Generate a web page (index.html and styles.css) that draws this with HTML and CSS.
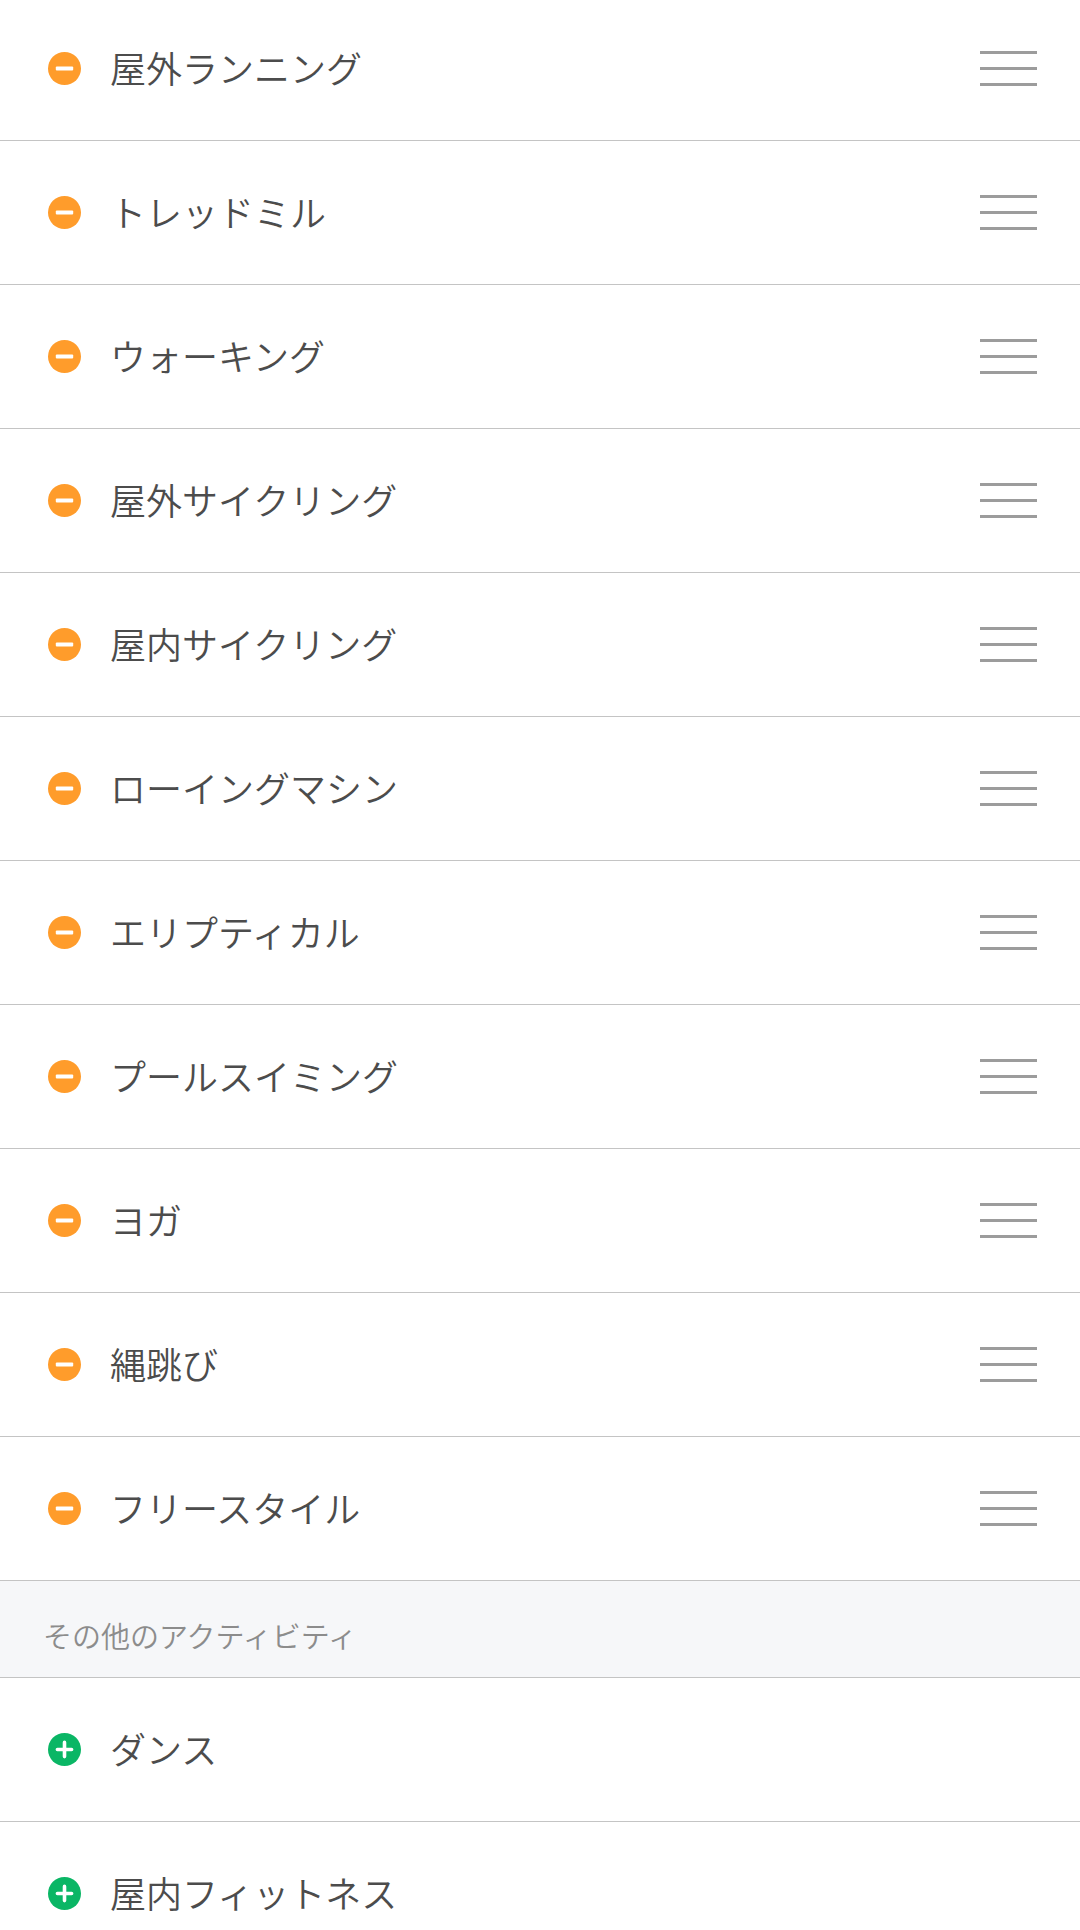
FILE: index.html
```html
<!DOCTYPE html>
<html lang="ja">
<head>
    <meta charset="UTF-8">
    <meta name="viewport" content="width=device-width, initial-scale=1.0">
    <title>アクティビティ</title>
    <link rel="stylesheet" href="styles.css">
</head>
<body>
    <svg class="symbols">
        <symbol id="minus" viewBox="0 0 33 33">
            <circle cx="16.5" cy="16.5" r="16.5" fill="#ff9c2b"/>
            <rect x="7.8" y="14.6" width="17.4" height="4" rx="1" fill="#fff"/>
        </symbol>
        <symbol id="plus" viewBox="0 0 33 33">
            <circle cx="16.5" cy="16.5" r="16.5" fill="#0ab665"/>
            <path d="M9.4 16.5h14.2M16.5 9.4v14.2" stroke="#fff" stroke-width="3.6" stroke-linecap="round"/>
        </symbol>
        <symbol id="handle" viewBox="0 0 57 35">
            <path d="M0 1.5h57M0 17.5h57M0 33.5h57" stroke="#9c9c9c" stroke-width="2.9"/>
        </symbol>
    </svg>

    <ul class="list current">
        <li class="row"><svg class="icon"><use href="#minus"/></svg><span class="name">屋外ランニング</span><svg class="handle"><use href="#handle"/></svg></li>
        <li class="row"><svg class="icon"><use href="#minus"/></svg><span class="name">トレッドミル</span><svg class="handle"><use href="#handle"/></svg></li>
        <li class="row"><svg class="icon"><use href="#minus"/></svg><span class="name">ウォーキング</span><svg class="handle"><use href="#handle"/></svg></li>
        <li class="row"><svg class="icon"><use href="#minus"/></svg><span class="name">屋外サイクリング</span><svg class="handle"><use href="#handle"/></svg></li>
        <li class="row"><svg class="icon"><use href="#minus"/></svg><span class="name">屋内サイクリング</span><svg class="handle"><use href="#handle"/></svg></li>
        <li class="row"><svg class="icon"><use href="#minus"/></svg><span class="name">ローイングマシン</span><svg class="handle"><use href="#handle"/></svg></li>
        <li class="row"><svg class="icon"><use href="#minus"/></svg><span class="name">エリプティカル</span><svg class="handle"><use href="#handle"/></svg></li>
        <li class="row"><svg class="icon"><use href="#minus"/></svg><span class="name">プールスイミング</span><svg class="handle"><use href="#handle"/></svg></li>
        <li class="row"><svg class="icon"><use href="#minus"/></svg><span class="name">ヨガ</span><svg class="handle"><use href="#handle"/></svg></li>
        <li class="row"><svg class="icon"><use href="#minus"/></svg><span class="name">縄跳び</span><svg class="handle"><use href="#handle"/></svg></li>
        <li class="row"><svg class="icon"><use href="#minus"/></svg><span class="name">フリースタイル</span><svg class="handle"><use href="#handle"/></svg></li>
    </ul>

    <h2 class="section">その他のアクティビティ</h2>

    <ul class="list">
        <li class="row"><svg class="icon"><use href="#plus"/></svg><span class="name">ダンス</span></li>
        <li class="row"><svg class="icon"><use href="#plus"/></svg><span class="name">屋内フィットネス</span></li>
    </ul>
</body>
</html>
```

FILE: styles.css
```css
* {
    box-sizing: border-box;
}

body {
    margin: 0;
    height: 1930px;
    overflow: hidden;
    background-color: #fff;
    font-family: "Noto Sans CJK JP", sans-serif;
    font-weight: 350;
    color: #4c4c4c;
}

.symbols {
    display: none;
}

.list {
    list-style: none;
    margin: 0;
    padding: 0;
}

/* list is scrolled a little under the top edge */
.current {
    margin-top: -3px;
}

.row {
    display: flex;
    align-items: center;
    height: 144px;
    padding: 0 43px 0 48px;
    border-bottom: 1px solid #c4c4c4;
}

.icon {
    width: 33px;
    height: 33px;
    margin-right: 29px;
}

.name {
    flex: 1;
    padding-bottom: 2px;
    font-size: 36px;
    line-height: 53px;
}

.handle {
    width: 57px;
    height: 35px;
}

.section {
    display: flex;
    align-items: center;
    height: 97px;
    margin: 0;
    padding: 11px 43px 0;
    border-bottom: 1px solid #c4c4c4;
    background-color: #f6f7f9;
    font-size: 29px;
    font-weight: 350;
    color: #8c8c8c;
}
```
